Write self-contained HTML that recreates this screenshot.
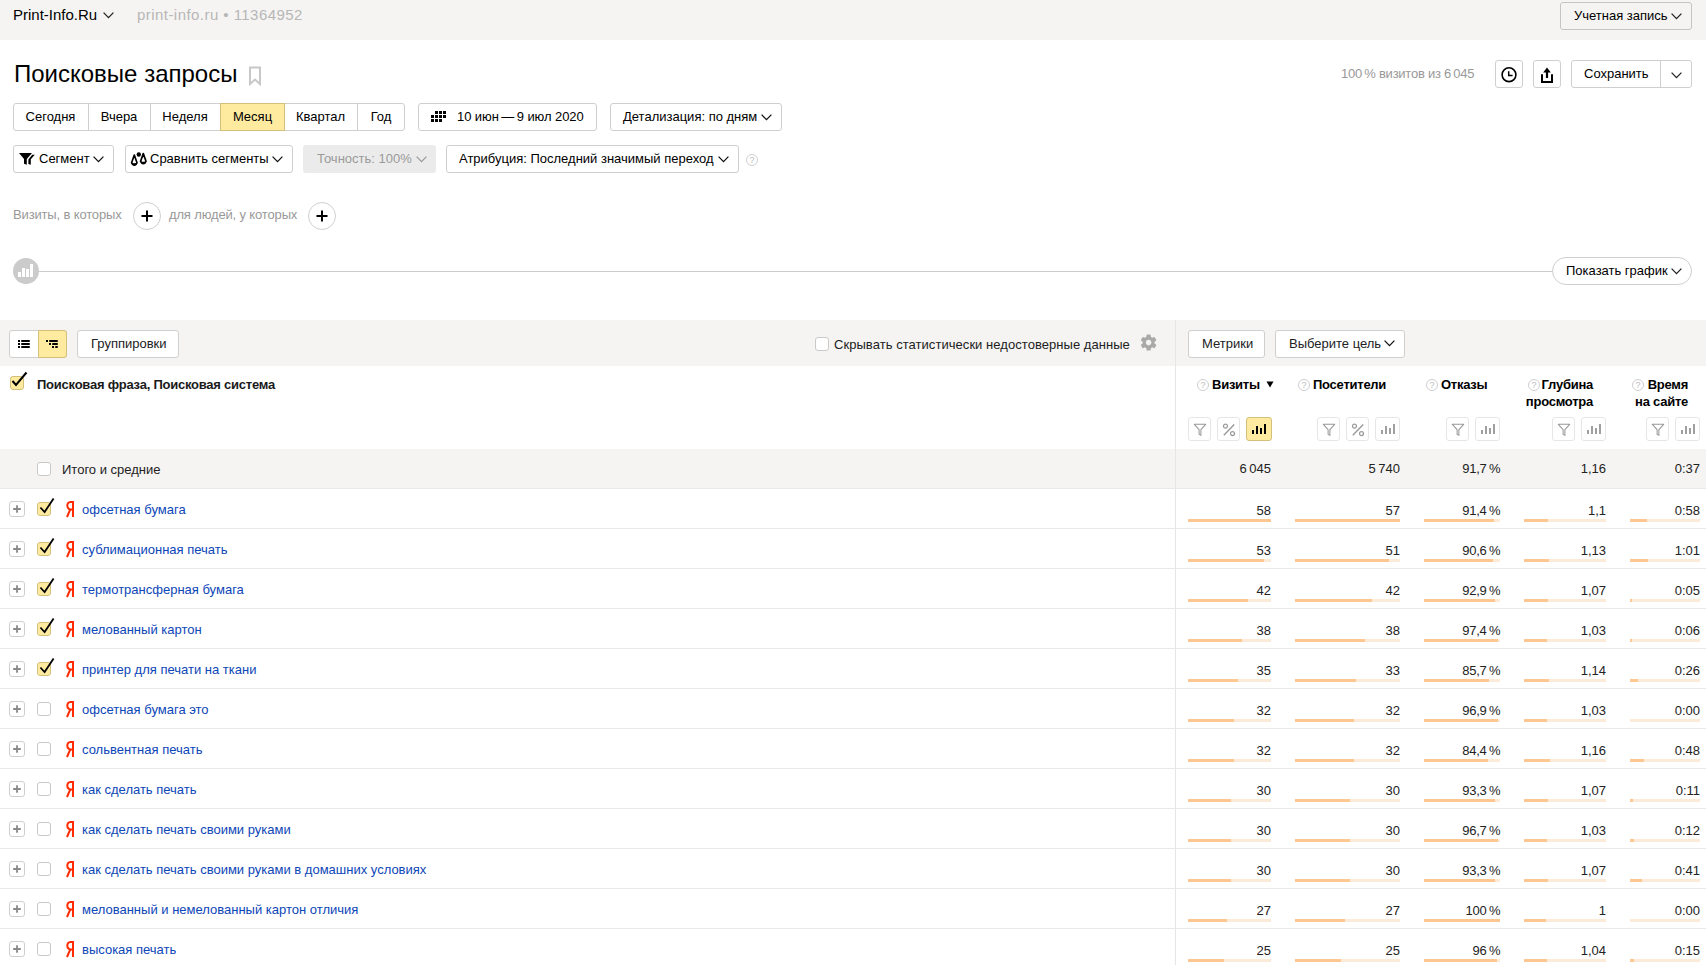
<!DOCTYPE html><html><head><meta charset="utf-8"><title>Поисковые запросы</title><style>
*{box-sizing:border-box;margin:0;padding:0}
html,body{width:1706px;height:965px;overflow:hidden;background:#fff}
body{position:relative;font-family:"Liberation Sans",sans-serif;font-size:13px;line-height:15px;color:#000}
.a{position:absolute;white-space:nowrap}
.btn{position:absolute;border:1px solid #cfcfcf;border-radius:3px;background:#fff}
.chev{position:absolute}
.g{color:#999}
.lnk{color:#0c46b7}
.rt{text-align:right}
.b{font-weight:bold;letter-spacing:-0.25px}
.hb{position:absolute;border:1px solid #e6e6e6;border-radius:3px;background:#fff;width:23px;height:24px}
.hby{position:absolute;border:1px solid #d4c07a;border-radius:3px;background:#ffeba0;width:26px;height:24px}
.cb{position:absolute;width:14px;height:14px;border:1px solid #c9c9c9;border-radius:3px;background:#fff}
.cbc{position:absolute;width:14px;height:14px;border:1px solid #d4c07a;border-radius:3px;background:#ffeba0}
.pl{position:absolute;width:16px;height:16px;border:1px solid #cfcfcf;border-radius:3px;background:#fff}
.rowline{position:absolute;left:0;width:1706px;height:1px;background:#e8e8e8}
.bar{position:absolute;height:3px;background:#fdebd9}
.bar i{position:absolute;left:0;top:0;height:3px;background:#fec792}
.help{position:absolute;width:12px;height:12px;border:1px solid #cfcfcf;border-radius:50%;color:#bbb;font-size:9px;line-height:10px;text-align:center}
</style></head><body>
<div class="a" style="left:0;top:0;width:1706px;height:40px;background:#f5f4f2"></div>
<div class="a " style="left:13px;top:6px;font-size:15px;line-height:17px">Print-Info.Ru</div>
<svg class="chev" style="left:102px;top:11px" width="13" height="8" viewBox="0 0 13 8"><path d="M1.6 1.6 L6.5 6.6 L11.4 1.6" fill="none" stroke="#222" stroke-width="1.3"/></svg>
<div class="a " style="left:137px;top:6px;font-size:15px;line-height:17px;color:#b7b7b7;letter-spacing:0.45px">print-info.ru • 11364952</div>
<div class="btn" style="left:1560px;top:2px;width:132px;height:28px;background:transparent;border-color:#c4c4c4"></div>
<div class="a " style="left:1574px;top:8px;">Учетная запись</div>
<svg class="chev" style="left:1670px;top:12px" width="13" height="8" viewBox="0 0 13 8"><path d="M1.6 1.6 L6.5 6.6 L11.4 1.6" fill="none" stroke="#222" stroke-width="1.3"/></svg>
<div class="a " style="left:14px;top:60px;font-size:24px;line-height:27px">Поисковые запросы</div>
<svg class="a" style="left:248px;top:66px" width="14" height="20" viewBox="0 0 14 20"><path d="M2 1.5 H12 V18 L7 13.5 L2 18 Z" fill="none" stroke="#c8c8c8" stroke-width="2"/></svg>
<div class="a g" style="left:1341px;top:66px;letter-spacing:-0.25px">100&#8201;% визитов из 6&#8201;045</div>
<div class="btn" style="left:1495px;top:60px;width:28px;height:28px"></div>
<svg class="a" style="left:1499px;top:64px" width="20" height="20" viewBox="0 0 20 20"><circle cx="10" cy="10.7" r="6.9" fill="none" stroke="#000" stroke-width="1.6"/><path d="M9.7 7.2 V11.6 H13.6" fill="none" stroke="#000" stroke-width="1.5"/></svg>
<div class="btn" style="left:1533px;top:60px;width:28px;height:28px"></div>
<svg class="a" style="left:1537px;top:64px" width="20" height="20" viewBox="0 0 20 20"><path d="M10 3.4 L6.2 8.6 H13.8 Z" fill="#000"/><path d="M10 8 V14" stroke="#000" stroke-width="2.2"/><path d="M5 10.2 V18 H15 V10.2" fill="none" stroke="#000" stroke-width="2"/></svg>
<div class="btn" style="left:1571px;top:60px;width:121px;height:28px"></div>
<div class="a" style="left:1660px;top:61px;width:1px;height:26px;background:#cfcfcf"></div>
<div class="a " style="left:1584px;top:66px;">Сохранить</div>
<svg class="chev" style="left:1670px;top:71px" width="13" height="8" viewBox="0 0 13 8"><path d="M1.6 1.6 L6.5 6.6 L11.4 1.6" fill="none" stroke="#222" stroke-width="1.3"/></svg>
<div class="btn" style="left:13px;top:103px;width:392px;height:28px"></div>
<div class="a" style="left:220px;top:103px;width:65px;height:28px;background:#ffeba0;border:1px solid #d4c07a"></div>
<div class="a" style="left:88px;top:104px;width:1px;height:26px;background:#cfcfcf"></div>
<div class="a" style="left:150px;top:104px;width:1px;height:26px;background:#cfcfcf"></div>
<div class="a" style="left:357px;top:104px;width:1px;height:26px;background:#cfcfcf"></div>
<div class="a" style="left:13px;top:109px;width:75px;text-align:center">Сегодня</div>
<div class="a" style="left:88px;top:109px;width:62px;text-align:center">Вчера</div>
<div class="a" style="left:150px;top:109px;width:70px;text-align:center">Неделя</div>
<div class="a" style="left:220px;top:109px;width:65px;text-align:center">Месяц</div>
<div class="a" style="left:284px;top:109px;width:73px;text-align:center">Квартал</div>
<div class="a" style="left:357px;top:109px;width:48px;text-align:center">Год</div>
<div class="btn" style="left:418px;top:103px;width:179px;height:28px"></div>
<svg class="a" style="left:431px;top:111px" width="15" height="11" viewBox="0 0 15 11" fill="#000"><rect x="4" y="0" width="3" height="3"/><rect x="8" y="0" width="3" height="3"/><rect x="12" y="0" width="3" height="3"/><rect x="0" y="4" width="3" height="3"/><rect x="4" y="4" width="3" height="3"/><rect x="8" y="4" width="3" height="3"/><rect x="12" y="4" width="3" height="3"/><rect x="0" y="8" width="3" height="3"/><rect x="4" y="8" width="3" height="3"/><rect x="8" y="8" width="3" height="3"/></svg>
<div class="a " style="left:457px;top:109px;letter-spacing:-0.08px">10 июн&#8201;—&#8201;9 июл 2020</div>
<div class="btn" style="left:610px;top:103px;width:172px;height:28px"></div>
<div class="a " style="left:623px;top:109px;">Детализация: по дням</div>
<svg class="chev" style="left:760px;top:113px" width="13" height="8" viewBox="0 0 13 8"><path d="M1.6 1.6 L6.5 6.6 L11.4 1.6" fill="none" stroke="#111" stroke-width="1.3"/></svg>
<div class="btn" style="left:13px;top:145px;width:101px;height:28px"></div>
<svg class="a" style="left:18px;top:152px" width="18" height="14" viewBox="0 0 18 14"><path d="M1 1 H14 L8.8 7 V12.8 L6 11.8 V7 Z" fill="#000"/><path d="M14.2 2.8 H16.8 L12.8 7.3 V12.8 L10.4 11.9 V7.4 Z" fill="#000"/></svg>
<div class="a " style="left:39px;top:151px;">Сегмент</div>
<svg class="chev" style="left:92px;top:155px" width="13" height="8" viewBox="0 0 13 8"><path d="M1.6 1.6 L6.5 6.6 L11.4 1.6" fill="none" stroke="#111" stroke-width="1.3"/></svg>
<div class="btn" style="left:125px;top:145px;width:168px;height:28px"></div>
<svg class="a" style="left:130px;top:152px" width="18" height="15" viewBox="0 0 18 15"><circle cx="8.8" cy="2.5" r="2.2" fill="#000"/><g transform="translate(0,0.8)"><path d="M4.3 2.2 L1.6 10 A3 3 0 0 0 7 10 Z" fill="none" stroke="#000" stroke-width="1.7" stroke-linejoin="round"/><path d="M4.3 10.5 H6.9 A2.6 2.6 0 0 1 1.7 10.5 Z" fill="#000"/></g><path d="M13.3 1.6 L10.6 9.3 A3 3 0 0 0 16 9.3 Z" fill="none" stroke="#000" stroke-width="1.7" stroke-linejoin="round"/><path d="M13.3 9.8 H15.9 A2.6 2.6 0 0 1 10.7 9.8 Z" fill="#000"/></svg>
<div class="a " style="left:150px;top:151px;">Сравнить сегменты</div>
<svg class="chev" style="left:271px;top:155px" width="13" height="8" viewBox="0 0 13 8"><path d="M1.6 1.6 L6.5 6.6 L11.4 1.6" fill="none" stroke="#111" stroke-width="1.3"/></svg>
<div class="a" style="left:303px;top:145px;width:133px;height:28px;background:#ebebeb;border-radius:3px"></div>
<div class="a " style="left:317px;top:151px;color:#9a9a9a">Точность: 100%</div>
<svg class="chev" style="left:415px;top:155px" width="13" height="8" viewBox="0 0 13 8"><path d="M1.6 1.6 L6.5 6.6 L11.4 1.6" fill="none" stroke="#9a9a9a" stroke-width="1.3"/></svg>
<div class="btn" style="left:446px;top:145px;width:293px;height:28px"></div>
<div class="a " style="left:459px;top:151px;">Атрибуция: Последний значимый переход</div>
<svg class="chev" style="left:717px;top:155px" width="13" height="8" viewBox="0 0 13 8"><path d="M1.6 1.6 L6.5 6.6 L11.4 1.6" fill="none" stroke="#111" stroke-width="1.3"/></svg>
<div class="help" style="left:746px;top:154px">?</div>
<div class="a g" style="left:13px;top:207px;letter-spacing:-0.15px">Визиты, в которых</div>
<div class="a" style="left:133px;top:202px;width:28px;height:28px;border:1px solid #cfcfcf;border-radius:50%"></div>
<svg class="a" style="left:139px;top:208px" width="16" height="16" viewBox="0 0 16 16"><path d="M8 2.5 V13.5 M2.5 8 H13.5" stroke="#000" stroke-width="2"/></svg>
<div class="a g" style="left:169px;top:207px;letter-spacing:-0.15px">для людей, у которых</div>
<div class="a" style="left:308px;top:202px;width:28px;height:28px;border:1px solid #cfcfcf;border-radius:50%"></div>
<svg class="a" style="left:314px;top:208px" width="16" height="16" viewBox="0 0 16 16"><path d="M8 2.5 V13.5 M2.5 8 H13.5" stroke="#000" stroke-width="2"/></svg>
<div class="a" style="left:26px;top:271px;width:1530px;height:1px;background:#cccccc"></div>
<div class="a" style="left:13px;top:258px;width:26px;height:26px;border-radius:50%;background:#cbcbcb"></div>
<svg class="a" style="left:13px;top:258px" width="26" height="26" viewBox="0 0 26 26" fill="#fff"><rect x="5" y="14" width="3" height="5"/><rect x="9" y="10" width="3" height="9"/><rect x="13" y="11" width="3" height="8"/><rect x="17" y="6" width="3" height="13"/></svg>
<div class="a" style="left:1552px;top:257px;width:140px;height:28px;border:1px solid #cfcfcf;border-radius:14px;background:#fff"></div>
<div class="a " style="left:1566px;top:263px;">Показать график</div>
<svg class="chev" style="left:1670px;top:267px" width="13" height="8" viewBox="0 0 13 8"><path d="M1.6 1.6 L6.5 6.6 L11.4 1.6" fill="none" stroke="#222" stroke-width="1.3"/></svg>
<div class="a" style="left:0;top:320px;width:1706px;height:46px;background:#f5f4f2"></div>
<div class="a" style="left:1175px;top:320px;width:1px;height:645px;background:#e6e6e6"></div>
<div class="btn" style="left:9px;top:330px;width:58px;height:28px"></div>
<div class="a" style="left:38px;top:330px;width:29px;height:28px;background:#ffeba0;border:1px solid #d4c07a;border-radius:0 3px 3px 0"></div>
<svg class="a" style="left:18px;top:340px" width="12" height="8" viewBox="0 0 12 8" fill="#000"><rect x="0" y="0" width="2" height="2"/><rect x="3" y="0" width="9" height="2" rx="1"/><rect x="0" y="3" width="2" height="2"/><rect x="3" y="3" width="9" height="2" rx="1"/><rect x="0" y="6" width="2" height="2"/><rect x="3" y="6" width="9" height="2" rx="1"/></svg>
<svg class="a" style="left:46px;top:340px" width="12" height="8" viewBox="0 0 12 8" fill="#000"><rect x="0" y="0" width="2" height="2"/><rect x="3" y="0" width="9" height="2" rx="1"/><rect x="3" y="3" width="2" height="2"/><rect x="6" y="3" width="6" height="2" rx="1"/><rect x="6" y="6" width="2" height="2"/><rect x="9" y="6" width="3" height="2" rx="1"/></svg>
<div class="btn" style="left:77px;top:330px;width:102px;height:28px"></div>
<div class="a " style="left:91px;top:336px;color:#222">Группировки</div>
<div class="cb" style="left:815px;top:337px"></div>
<div class="a " style="left:834px;top:337px;color:#222;letter-spacing:0.05px">Скрывать статистически недостоверные данные</div>
<svg class="a" style="left:1139.4px;top:332.6px" width="19.2" height="19.2" viewBox="0 0 24 24"><path fill="#a9a9a9" d="M19.4 13c.04-.33.06-.66.06-1s-.02-.67-.06-1l2.1-1.65c.19-.15.24-.42.12-.64l-2-3.46c-.12-.22-.39-.3-.61-.22l-2.49 1c-.52-.4-1.08-.73-1.69-.98l-.38-2.65A.49.49 0 0 0 14 2h-4c-.25 0-.46.18-.49.42l-.38 2.65c-.61.25-1.17.59-1.69.98l-2.49-1c-.23-.09-.49 0-.61.22l-2 3.46c-.13.22-.07.49.12.64L4.57 11c-.04.33-.07.67-.07 1s.03.67.07 1l-2.11 1.65c-.19.15-.24.42-.12.64l2 3.46c.12.22.39.3.61.22l2.49-1c.52.4 1.08.73 1.69.98l.38 2.65c.03.24.24.42.49.42h4c.25 0 .46-.18.49-.42l.38-2.65c.61-.25 1.17-.59 1.69-.98l2.49 1c.23.09.49 0 .61-.22l2-3.46c.12-.22.07-.49-.12-.64L19.4 13zM12 15.5c-1.93 0-3.5-1.57-3.5-3.5s1.57-3.5 3.5-3.5 3.5 1.57 3.5 3.5-1.57 3.5-3.5 3.5z"/></svg>
<div class="btn" style="left:1188px;top:330px;width:77px;height:28px"></div>
<div class="a " style="left:1202px;top:336px;color:#222">Метрики</div>
<div class="btn" style="left:1275px;top:330px;width:130px;height:28px"></div>
<div class="a " style="left:1289px;top:336px;color:#222">Выберите цель</div>
<svg class="chev" style="left:1383px;top:339px" width="13" height="8" viewBox="0 0 13 8"><path d="M1.6 1.6 L6.5 6.6 L11.4 1.6" fill="none" stroke="#111" stroke-width="1.3"/></svg>
<div class="cbc" style="left:10px;top:376px"></div>
<svg class="a" style="left:9px;top:370px" width="20" height="20" viewBox="0 0 20 20"><path d="M3.5 11 L7 15 L17.5 2.5" fill="none" stroke="#000" stroke-width="2"/></svg>
<div class="a b" style="left:37px;top:377px;color:#1a1a1a;letter-spacing:-0.24px">Поисковая фраза, Поисковая система</div>
<div class="help" style="left:1197px;top:379px">?</div>
<div class="a b" style="left:1212px;top:377px;">Визиты</div>
<svg class="a" style="left:1266px;top:381px" width="8" height="7" viewBox="0 0 8 7"><path d="M0.5 0.5 H7.5 L4 6.5 Z" fill="#000"/></svg>
<div class="help" style="left:1298px;top:379px">?</div>
<div class="a b" style="left:1313px;top:377px;">Посетители</div>
<div class="help" style="left:1426px;top:379px">?</div>
<div class="a b" style="left:1441px;top:377px;">Отказы</div>
<div class="help" style="left:1528px;top:379px">?</div>
<div class="a b rt" style="left:1499px;top:376px;width:94px;line-height:17px">Глубина<br>просмотра</div>
<div class="help" style="left:1632px;top:379px">?</div>
<div class="a b rt" style="left:1599px;top:376px;width:89px;line-height:17px">Время<br>на сайте</div>
<div class="hb" style="left:1188px;top:417px"></div><svg class="a" style="left:1193px;top:423px" width="14" height="14" viewBox="0 0 14 14"><path d="M1.3 1.3 H12.7 L7.9 6.7 V12.4 L6.1 11.4 V6.7 Z" fill="none" stroke="#999" stroke-width="1.05" stroke-linejoin="round"/></svg><div class="hb" style="left:1217px;top:417px"></div><svg class="a" style="left:1222px;top:423px" width="14" height="14" viewBox="0 0 14 14"><circle cx="3.5" cy="3.2" r="2" fill="none" stroke="#999" stroke-width="1.2"/><circle cx="10.5" cy="10.6" r="2" fill="none" stroke="#999" stroke-width="1.2"/><path d="M1.8 12.2 L12.2 1.6" stroke="#999" stroke-width="1.4"/></svg><div class="hby" style="left:1246px;top:417px"></div><svg class="a" style="left:1252px;top:424px" width="14" height="12" viewBox="0 0 14 12" fill="#000"><rect x="0" y="6" width="2" height="4"/><rect x="4" y="2" width="2" height="8"/><rect x="8" y="4" width="2" height="6"/><rect x="12" y="0" width="2" height="10"/></svg>
<div class="hb" style="left:1317px;top:417px"></div><svg class="a" style="left:1322px;top:423px" width="14" height="14" viewBox="0 0 14 14"><path d="M1.3 1.3 H12.7 L7.9 6.7 V12.4 L6.1 11.4 V6.7 Z" fill="none" stroke="#999" stroke-width="1.05" stroke-linejoin="round"/></svg><div class="hb" style="left:1346px;top:417px"></div><svg class="a" style="left:1351px;top:423px" width="14" height="14" viewBox="0 0 14 14"><circle cx="3.5" cy="3.2" r="2" fill="none" stroke="#999" stroke-width="1.2"/><circle cx="10.5" cy="10.6" r="2" fill="none" stroke="#999" stroke-width="1.2"/><path d="M1.8 12.2 L12.2 1.6" stroke="#999" stroke-width="1.4"/></svg><div class="hb" style="left:1375px;top:417px;width:25px"></div><svg class="a" style="left:1381px;top:424px" width="14" height="12" viewBox="0 0 14 12" fill="#a0a0a0"><rect x="0" y="6" width="2" height="4"/><rect x="4" y="2" width="2" height="8"/><rect x="8" y="4" width="2" height="6"/><rect x="12" y="0" width="2" height="10"/></svg>
<div class="hb" style="left:1446px;top:417px"></div><svg class="a" style="left:1451px;top:423px" width="14" height="14" viewBox="0 0 14 14"><path d="M1.3 1.3 H12.7 L7.9 6.7 V12.4 L6.1 11.4 V6.7 Z" fill="none" stroke="#999" stroke-width="1.05" stroke-linejoin="round"/></svg><div class="hb" style="left:1475px;top:417px;width:25px"></div><svg class="a" style="left:1481px;top:424px" width="14" height="12" viewBox="0 0 14 12" fill="#a0a0a0"><rect x="0" y="6" width="2" height="4"/><rect x="4" y="2" width="2" height="8"/><rect x="8" y="4" width="2" height="6"/><rect x="12" y="0" width="2" height="10"/></svg>
<div class="hb" style="left:1552px;top:417px"></div><svg class="a" style="left:1557px;top:423px" width="14" height="14" viewBox="0 0 14 14"><path d="M1.3 1.3 H12.7 L7.9 6.7 V12.4 L6.1 11.4 V6.7 Z" fill="none" stroke="#999" stroke-width="1.05" stroke-linejoin="round"/></svg><div class="hb" style="left:1581px;top:417px;width:25px"></div><svg class="a" style="left:1587px;top:424px" width="14" height="12" viewBox="0 0 14 12" fill="#a0a0a0"><rect x="0" y="6" width="2" height="4"/><rect x="4" y="2" width="2" height="8"/><rect x="8" y="4" width="2" height="6"/><rect x="12" y="0" width="2" height="10"/></svg>
<div class="hb" style="left:1646px;top:417px"></div><svg class="a" style="left:1651px;top:423px" width="14" height="14" viewBox="0 0 14 14"><path d="M1.3 1.3 H12.7 L7.9 6.7 V12.4 L6.1 11.4 V6.7 Z" fill="none" stroke="#999" stroke-width="1.05" stroke-linejoin="round"/></svg><div class="hb" style="left:1675px;top:417px;width:25px"></div><svg class="a" style="left:1681px;top:424px" width="14" height="12" viewBox="0 0 14 12" fill="#a0a0a0"><rect x="0" y="6" width="2" height="4"/><rect x="4" y="2" width="2" height="8"/><rect x="8" y="4" width="2" height="6"/><rect x="12" y="0" width="2" height="10"/></svg>
<div class="a" style="left:0;top:449px;width:1706px;height:40px;background:#f5f4f2"></div>
<div class="a" style="left:1175px;top:449px;width:1px;height:40px;background:#e6e6e6"></div>
<div class="rowline" style="top:488px"></div>
<div class="cb" style="left:37px;top:462px"></div>
<div class="a " style="left:62px;top:462px;color:#222">Итого и средние</div>
<div class="a rt" style="left:1188px;top:461px;width:83px;color:#222;">6&#8201;045</div><div class="a rt" style="left:1295px;top:461px;width:105px;color:#222;">5&#8201;740</div><div class="a rt" style="left:1424px;top:461px;width:76.3px;color:#222;letter-spacing:-0.25px;">91,7<span style="margin-left:2.5px">%</span></div><div class="a rt" style="left:1524px;top:461px;width:82px;color:#222;">1,16</div><div class="a rt" style="left:1630px;top:461px;width:70px;color:#222;">0:37</div>
<div class="rowline" style="top:528px"></div>
<div class="pl" style="left:9px;top:501px"></div>
<svg class="a" style="left:9px;top:501px" width="16" height="16" viewBox="0 0 16 16"><path d="M8 4.2 V11.8 M4.2 8 H11.8" stroke="#8a8a8a" stroke-width="1.8"/></svg>
<div class="cbc" style="left:37px;top:502px"></div>
<svg class="a" style="left:37px;top:496px" width="20" height="20" viewBox="0 0 20 20"><path d="M3.4 11.5 L7.6 16 L16.6 2.4" fill="none" stroke="#000" stroke-width="1.8"/></svg>
<svg class="a" style="left:64px;top:499px" width="12" height="20" viewBox="0 0 12 20"><path d="M9 3 H6.6 C4.2 3 3.3 4.8 3.3 6.6 C3.3 8.9 4.6 10.4 6.9 10.4 H9" fill="none" stroke="#ff2a00" stroke-width="2"/><rect x="8" y="2" width="2" height="16" fill="#ff2a00"/><path d="M6.4 10.2 L3 18" fill="none" stroke="#ff2a00" stroke-width="2"/></svg>
<div class="a lnk" style="left:82px;top:502px;">офсетная бумага</div>
<div class="a rt" style="left:1188px;top:503px;width:83px;color:#222;">58</div><div class="a rt" style="left:1295px;top:503px;width:105px;color:#222;">57</div><div class="a rt" style="left:1424px;top:503px;width:76.3px;color:#222;letter-spacing:-0.25px;">91,4<span style="margin-left:2.5px">%</span></div><div class="a rt" style="left:1524px;top:503px;width:82px;color:#222;">1,1</div><div class="a rt" style="left:1630px;top:503px;width:70px;color:#222;">0:58</div>
<div class="bar" style="left:1188px;top:519px;width:83px"><i style="width:83.0px"></i></div>
<div class="bar" style="left:1295px;top:519px;width:105px"><i style="width:105.0px"></i></div>
<div class="bar" style="left:1424px;top:519px;width:76px"><i style="width:69.5px"></i></div>
<div class="bar" style="left:1524px;top:519px;width:82px"><i style="width:24.4px"></i></div>
<div class="bar" style="left:1630px;top:519px;width:70px"><i style="width:17.2px"></i></div>
<div class="rowline" style="top:568px"></div>
<div class="pl" style="left:9px;top:541px"></div>
<svg class="a" style="left:9px;top:541px" width="16" height="16" viewBox="0 0 16 16"><path d="M8 4.2 V11.8 M4.2 8 H11.8" stroke="#8a8a8a" stroke-width="1.8"/></svg>
<div class="cbc" style="left:37px;top:542px"></div>
<svg class="a" style="left:37px;top:536px" width="20" height="20" viewBox="0 0 20 20"><path d="M3.4 11.5 L7.6 16 L16.6 2.4" fill="none" stroke="#000" stroke-width="1.8"/></svg>
<svg class="a" style="left:64px;top:539px" width="12" height="20" viewBox="0 0 12 20"><path d="M9 3 H6.6 C4.2 3 3.3 4.8 3.3 6.6 C3.3 8.9 4.6 10.4 6.9 10.4 H9" fill="none" stroke="#ff2a00" stroke-width="2"/><rect x="8" y="2" width="2" height="16" fill="#ff2a00"/><path d="M6.4 10.2 L3 18" fill="none" stroke="#ff2a00" stroke-width="2"/></svg>
<div class="a lnk" style="left:82px;top:542px;">сублимационная печать</div>
<div class="a rt" style="left:1188px;top:543px;width:83px;color:#222;">53</div><div class="a rt" style="left:1295px;top:543px;width:105px;color:#222;">51</div><div class="a rt" style="left:1424px;top:543px;width:76.3px;color:#222;letter-spacing:-0.25px;">90,6<span style="margin-left:2.5px">%</span></div><div class="a rt" style="left:1524px;top:543px;width:82px;color:#222;">1,13</div><div class="a rt" style="left:1630px;top:543px;width:70px;color:#222;">1:01</div>
<div class="bar" style="left:1188px;top:559px;width:83px"><i style="width:75.8px"></i></div>
<div class="bar" style="left:1295px;top:559px;width:105px"><i style="width:93.9px"></i></div>
<div class="bar" style="left:1424px;top:559px;width:76px"><i style="width:68.9px"></i></div>
<div class="bar" style="left:1524px;top:559px;width:82px"><i style="width:25.0px"></i></div>
<div class="bar" style="left:1630px;top:559px;width:70px"><i style="width:18.1px"></i></div>
<div class="rowline" style="top:608px"></div>
<div class="pl" style="left:9px;top:581px"></div>
<svg class="a" style="left:9px;top:581px" width="16" height="16" viewBox="0 0 16 16"><path d="M8 4.2 V11.8 M4.2 8 H11.8" stroke="#8a8a8a" stroke-width="1.8"/></svg>
<div class="cbc" style="left:37px;top:582px"></div>
<svg class="a" style="left:37px;top:576px" width="20" height="20" viewBox="0 0 20 20"><path d="M3.4 11.5 L7.6 16 L16.6 2.4" fill="none" stroke="#000" stroke-width="1.8"/></svg>
<svg class="a" style="left:64px;top:579px" width="12" height="20" viewBox="0 0 12 20"><path d="M9 3 H6.6 C4.2 3 3.3 4.8 3.3 6.6 C3.3 8.9 4.6 10.4 6.9 10.4 H9" fill="none" stroke="#ff2a00" stroke-width="2"/><rect x="8" y="2" width="2" height="16" fill="#ff2a00"/><path d="M6.4 10.2 L3 18" fill="none" stroke="#ff2a00" stroke-width="2"/></svg>
<div class="a lnk" style="left:82px;top:582px;">термотрансферная бумага</div>
<div class="a rt" style="left:1188px;top:583px;width:83px;color:#222;">42</div><div class="a rt" style="left:1295px;top:583px;width:105px;color:#222;">42</div><div class="a rt" style="left:1424px;top:583px;width:76.3px;color:#222;letter-spacing:-0.25px;">92,9<span style="margin-left:2.5px">%</span></div><div class="a rt" style="left:1524px;top:583px;width:82px;color:#222;">1,07</div><div class="a rt" style="left:1630px;top:583px;width:70px;color:#222;">0:05</div>
<div class="bar" style="left:1188px;top:599px;width:83px"><i style="width:60.1px"></i></div>
<div class="bar" style="left:1295px;top:599px;width:105px"><i style="width:77.4px"></i></div>
<div class="bar" style="left:1424px;top:599px;width:76px"><i style="width:70.6px"></i></div>
<div class="bar" style="left:1524px;top:599px;width:82px"><i style="width:23.7px"></i></div>
<div class="bar" style="left:1630px;top:599px;width:70px"><i style="width:1.5px"></i></div>
<div class="rowline" style="top:648px"></div>
<div class="pl" style="left:9px;top:621px"></div>
<svg class="a" style="left:9px;top:621px" width="16" height="16" viewBox="0 0 16 16"><path d="M8 4.2 V11.8 M4.2 8 H11.8" stroke="#8a8a8a" stroke-width="1.8"/></svg>
<div class="cbc" style="left:37px;top:622px"></div>
<svg class="a" style="left:37px;top:616px" width="20" height="20" viewBox="0 0 20 20"><path d="M3.4 11.5 L7.6 16 L16.6 2.4" fill="none" stroke="#000" stroke-width="1.8"/></svg>
<svg class="a" style="left:64px;top:619px" width="12" height="20" viewBox="0 0 12 20"><path d="M9 3 H6.6 C4.2 3 3.3 4.8 3.3 6.6 C3.3 8.9 4.6 10.4 6.9 10.4 H9" fill="none" stroke="#ff2a00" stroke-width="2"/><rect x="8" y="2" width="2" height="16" fill="#ff2a00"/><path d="M6.4 10.2 L3 18" fill="none" stroke="#ff2a00" stroke-width="2"/></svg>
<div class="a lnk" style="left:82px;top:622px;">мелованный картон</div>
<div class="a rt" style="left:1188px;top:623px;width:83px;color:#222;">38</div><div class="a rt" style="left:1295px;top:623px;width:105px;color:#222;">38</div><div class="a rt" style="left:1424px;top:623px;width:76.3px;color:#222;letter-spacing:-0.25px;">97,4<span style="margin-left:2.5px">%</span></div><div class="a rt" style="left:1524px;top:623px;width:82px;color:#222;">1,03</div><div class="a rt" style="left:1630px;top:623px;width:70px;color:#222;">0:06</div>
<div class="bar" style="left:1188px;top:639px;width:83px"><i style="width:54.4px"></i></div>
<div class="bar" style="left:1295px;top:639px;width:105px"><i style="width:70.0px"></i></div>
<div class="bar" style="left:1424px;top:639px;width:76px"><i style="width:74.0px"></i></div>
<div class="bar" style="left:1524px;top:639px;width:82px"><i style="width:22.8px"></i></div>
<div class="bar" style="left:1630px;top:639px;width:70px"><i style="width:1.8px"></i></div>
<div class="rowline" style="top:688px"></div>
<div class="pl" style="left:9px;top:661px"></div>
<svg class="a" style="left:9px;top:661px" width="16" height="16" viewBox="0 0 16 16"><path d="M8 4.2 V11.8 M4.2 8 H11.8" stroke="#8a8a8a" stroke-width="1.8"/></svg>
<div class="cbc" style="left:37px;top:662px"></div>
<svg class="a" style="left:37px;top:656px" width="20" height="20" viewBox="0 0 20 20"><path d="M3.4 11.5 L7.6 16 L16.6 2.4" fill="none" stroke="#000" stroke-width="1.8"/></svg>
<svg class="a" style="left:64px;top:659px" width="12" height="20" viewBox="0 0 12 20"><path d="M9 3 H6.6 C4.2 3 3.3 4.8 3.3 6.6 C3.3 8.9 4.6 10.4 6.9 10.4 H9" fill="none" stroke="#ff2a00" stroke-width="2"/><rect x="8" y="2" width="2" height="16" fill="#ff2a00"/><path d="M6.4 10.2 L3 18" fill="none" stroke="#ff2a00" stroke-width="2"/></svg>
<div class="a lnk" style="left:82px;top:662px;">принтер для печати на ткани</div>
<div class="a rt" style="left:1188px;top:663px;width:83px;color:#222;">35</div><div class="a rt" style="left:1295px;top:663px;width:105px;color:#222;">33</div><div class="a rt" style="left:1424px;top:663px;width:76.3px;color:#222;letter-spacing:-0.25px;">85,7<span style="margin-left:2.5px">%</span></div><div class="a rt" style="left:1524px;top:663px;width:82px;color:#222;">1,14</div><div class="a rt" style="left:1630px;top:663px;width:70px;color:#222;">0:26</div>
<div class="bar" style="left:1188px;top:679px;width:83px"><i style="width:50.1px"></i></div>
<div class="bar" style="left:1295px;top:679px;width:105px"><i style="width:60.8px"></i></div>
<div class="bar" style="left:1424px;top:679px;width:76px"><i style="width:65.1px"></i></div>
<div class="bar" style="left:1524px;top:679px;width:82px"><i style="width:25.3px"></i></div>
<div class="bar" style="left:1630px;top:679px;width:70px"><i style="width:7.7px"></i></div>
<div class="rowline" style="top:728px"></div>
<div class="pl" style="left:9px;top:701px"></div>
<svg class="a" style="left:9px;top:701px" width="16" height="16" viewBox="0 0 16 16"><path d="M8 4.2 V11.8 M4.2 8 H11.8" stroke="#8a8a8a" stroke-width="1.8"/></svg>
<div class="cb" style="left:37px;top:702px"></div>
<svg class="a" style="left:64px;top:699px" width="12" height="20" viewBox="0 0 12 20"><path d="M9 3 H6.6 C4.2 3 3.3 4.8 3.3 6.6 C3.3 8.9 4.6 10.4 6.9 10.4 H9" fill="none" stroke="#ff2a00" stroke-width="2"/><rect x="8" y="2" width="2" height="16" fill="#ff2a00"/><path d="M6.4 10.2 L3 18" fill="none" stroke="#ff2a00" stroke-width="2"/></svg>
<div class="a lnk" style="left:82px;top:702px;">офсетная бумага это</div>
<div class="a rt" style="left:1188px;top:703px;width:83px;color:#222;">32</div><div class="a rt" style="left:1295px;top:703px;width:105px;color:#222;">32</div><div class="a rt" style="left:1424px;top:703px;width:76.3px;color:#222;letter-spacing:-0.25px;">96,9<span style="margin-left:2.5px">%</span></div><div class="a rt" style="left:1524px;top:703px;width:82px;color:#222;">1,03</div><div class="a rt" style="left:1630px;top:703px;width:70px;color:#222;">0:00</div>
<div class="bar" style="left:1188px;top:719px;width:83px"><i style="width:45.8px"></i></div>
<div class="bar" style="left:1295px;top:719px;width:105px"><i style="width:58.9px"></i></div>
<div class="bar" style="left:1424px;top:719px;width:76px"><i style="width:73.6px"></i></div>
<div class="bar" style="left:1524px;top:719px;width:82px"><i style="width:22.8px"></i></div>
<div class="bar" style="left:1630px;top:719px;width:70px"><i style="width:0.0px"></i></div>
<div class="rowline" style="top:768px"></div>
<div class="pl" style="left:9px;top:741px"></div>
<svg class="a" style="left:9px;top:741px" width="16" height="16" viewBox="0 0 16 16"><path d="M8 4.2 V11.8 M4.2 8 H11.8" stroke="#8a8a8a" stroke-width="1.8"/></svg>
<div class="cb" style="left:37px;top:742px"></div>
<svg class="a" style="left:64px;top:739px" width="12" height="20" viewBox="0 0 12 20"><path d="M9 3 H6.6 C4.2 3 3.3 4.8 3.3 6.6 C3.3 8.9 4.6 10.4 6.9 10.4 H9" fill="none" stroke="#ff2a00" stroke-width="2"/><rect x="8" y="2" width="2" height="16" fill="#ff2a00"/><path d="M6.4 10.2 L3 18" fill="none" stroke="#ff2a00" stroke-width="2"/></svg>
<div class="a lnk" style="left:82px;top:742px;">сольвентная печать</div>
<div class="a rt" style="left:1188px;top:743px;width:83px;color:#222;">32</div><div class="a rt" style="left:1295px;top:743px;width:105px;color:#222;">32</div><div class="a rt" style="left:1424px;top:743px;width:76.3px;color:#222;letter-spacing:-0.25px;">84,4<span style="margin-left:2.5px">%</span></div><div class="a rt" style="left:1524px;top:743px;width:82px;color:#222;">1,16</div><div class="a rt" style="left:1630px;top:743px;width:70px;color:#222;">0:48</div>
<div class="bar" style="left:1188px;top:759px;width:83px"><i style="width:45.8px"></i></div>
<div class="bar" style="left:1295px;top:759px;width:105px"><i style="width:58.9px"></i></div>
<div class="bar" style="left:1424px;top:759px;width:76px"><i style="width:64.1px"></i></div>
<div class="bar" style="left:1524px;top:759px;width:82px"><i style="width:25.7px"></i></div>
<div class="bar" style="left:1630px;top:759px;width:70px"><i style="width:14.2px"></i></div>
<div class="rowline" style="top:808px"></div>
<div class="pl" style="left:9px;top:781px"></div>
<svg class="a" style="left:9px;top:781px" width="16" height="16" viewBox="0 0 16 16"><path d="M8 4.2 V11.8 M4.2 8 H11.8" stroke="#8a8a8a" stroke-width="1.8"/></svg>
<div class="cb" style="left:37px;top:782px"></div>
<svg class="a" style="left:64px;top:779px" width="12" height="20" viewBox="0 0 12 20"><path d="M9 3 H6.6 C4.2 3 3.3 4.8 3.3 6.6 C3.3 8.9 4.6 10.4 6.9 10.4 H9" fill="none" stroke="#ff2a00" stroke-width="2"/><rect x="8" y="2" width="2" height="16" fill="#ff2a00"/><path d="M6.4 10.2 L3 18" fill="none" stroke="#ff2a00" stroke-width="2"/></svg>
<div class="a lnk" style="left:82px;top:782px;">как сделать печать</div>
<div class="a rt" style="left:1188px;top:783px;width:83px;color:#222;">30</div><div class="a rt" style="left:1295px;top:783px;width:105px;color:#222;">30</div><div class="a rt" style="left:1424px;top:783px;width:76.3px;color:#222;letter-spacing:-0.25px;">93,3<span style="margin-left:2.5px">%</span></div><div class="a rt" style="left:1524px;top:783px;width:82px;color:#222;">1,07</div><div class="a rt" style="left:1630px;top:783px;width:70px;color:#222;">0:11</div>
<div class="bar" style="left:1188px;top:799px;width:83px"><i style="width:42.9px"></i></div>
<div class="bar" style="left:1295px;top:799px;width:105px"><i style="width:55.3px"></i></div>
<div class="bar" style="left:1424px;top:799px;width:76px"><i style="width:70.9px"></i></div>
<div class="bar" style="left:1524px;top:799px;width:82px"><i style="width:23.7px"></i></div>
<div class="bar" style="left:1630px;top:799px;width:70px"><i style="width:3.3px"></i></div>
<div class="rowline" style="top:848px"></div>
<div class="pl" style="left:9px;top:821px"></div>
<svg class="a" style="left:9px;top:821px" width="16" height="16" viewBox="0 0 16 16"><path d="M8 4.2 V11.8 M4.2 8 H11.8" stroke="#8a8a8a" stroke-width="1.8"/></svg>
<div class="cb" style="left:37px;top:822px"></div>
<svg class="a" style="left:64px;top:819px" width="12" height="20" viewBox="0 0 12 20"><path d="M9 3 H6.6 C4.2 3 3.3 4.8 3.3 6.6 C3.3 8.9 4.6 10.4 6.9 10.4 H9" fill="none" stroke="#ff2a00" stroke-width="2"/><rect x="8" y="2" width="2" height="16" fill="#ff2a00"/><path d="M6.4 10.2 L3 18" fill="none" stroke="#ff2a00" stroke-width="2"/></svg>
<div class="a lnk" style="left:82px;top:822px;">как сделать печать своими руками</div>
<div class="a rt" style="left:1188px;top:823px;width:83px;color:#222;">30</div><div class="a rt" style="left:1295px;top:823px;width:105px;color:#222;">30</div><div class="a rt" style="left:1424px;top:823px;width:76.3px;color:#222;letter-spacing:-0.25px;">96,7<span style="margin-left:2.5px">%</span></div><div class="a rt" style="left:1524px;top:823px;width:82px;color:#222;">1,03</div><div class="a rt" style="left:1630px;top:823px;width:70px;color:#222;">0:12</div>
<div class="bar" style="left:1188px;top:839px;width:83px"><i style="width:42.9px"></i></div>
<div class="bar" style="left:1295px;top:839px;width:105px"><i style="width:55.3px"></i></div>
<div class="bar" style="left:1424px;top:839px;width:76px"><i style="width:73.5px"></i></div>
<div class="bar" style="left:1524px;top:839px;width:82px"><i style="width:22.8px"></i></div>
<div class="bar" style="left:1630px;top:839px;width:70px"><i style="width:3.6px"></i></div>
<div class="rowline" style="top:888px"></div>
<div class="pl" style="left:9px;top:861px"></div>
<svg class="a" style="left:9px;top:861px" width="16" height="16" viewBox="0 0 16 16"><path d="M8 4.2 V11.8 M4.2 8 H11.8" stroke="#8a8a8a" stroke-width="1.8"/></svg>
<div class="cb" style="left:37px;top:862px"></div>
<svg class="a" style="left:64px;top:859px" width="12" height="20" viewBox="0 0 12 20"><path d="M9 3 H6.6 C4.2 3 3.3 4.8 3.3 6.6 C3.3 8.9 4.6 10.4 6.9 10.4 H9" fill="none" stroke="#ff2a00" stroke-width="2"/><rect x="8" y="2" width="2" height="16" fill="#ff2a00"/><path d="M6.4 10.2 L3 18" fill="none" stroke="#ff2a00" stroke-width="2"/></svg>
<div class="a lnk" style="left:82px;top:862px;">как сделать печать своими руками в домашних условиях</div>
<div class="a rt" style="left:1188px;top:863px;width:83px;color:#222;">30</div><div class="a rt" style="left:1295px;top:863px;width:105px;color:#222;">30</div><div class="a rt" style="left:1424px;top:863px;width:76.3px;color:#222;letter-spacing:-0.25px;">93,3<span style="margin-left:2.5px">%</span></div><div class="a rt" style="left:1524px;top:863px;width:82px;color:#222;">1,07</div><div class="a rt" style="left:1630px;top:863px;width:70px;color:#222;">0:41</div>
<div class="bar" style="left:1188px;top:879px;width:83px"><i style="width:42.9px"></i></div>
<div class="bar" style="left:1295px;top:879px;width:105px"><i style="width:55.3px"></i></div>
<div class="bar" style="left:1424px;top:879px;width:76px"><i style="width:70.9px"></i></div>
<div class="bar" style="left:1524px;top:879px;width:82px"><i style="width:23.7px"></i></div>
<div class="bar" style="left:1630px;top:879px;width:70px"><i style="width:12.2px"></i></div>
<div class="rowline" style="top:928px"></div>
<div class="pl" style="left:9px;top:901px"></div>
<svg class="a" style="left:9px;top:901px" width="16" height="16" viewBox="0 0 16 16"><path d="M8 4.2 V11.8 M4.2 8 H11.8" stroke="#8a8a8a" stroke-width="1.8"/></svg>
<div class="cb" style="left:37px;top:902px"></div>
<svg class="a" style="left:64px;top:899px" width="12" height="20" viewBox="0 0 12 20"><path d="M9 3 H6.6 C4.2 3 3.3 4.8 3.3 6.6 C3.3 8.9 4.6 10.4 6.9 10.4 H9" fill="none" stroke="#ff2a00" stroke-width="2"/><rect x="8" y="2" width="2" height="16" fill="#ff2a00"/><path d="M6.4 10.2 L3 18" fill="none" stroke="#ff2a00" stroke-width="2"/></svg>
<div class="a lnk" style="left:82px;top:902px;">мелованный и немелованный картон отличия</div>
<div class="a rt" style="left:1188px;top:903px;width:83px;color:#222;">27</div><div class="a rt" style="left:1295px;top:903px;width:105px;color:#222;">27</div><div class="a rt" style="left:1424px;top:903px;width:76.3px;color:#222;letter-spacing:-0.25px;">100<span style="margin-left:2.5px">%</span></div><div class="a rt" style="left:1524px;top:903px;width:82px;color:#222;">1</div><div class="a rt" style="left:1630px;top:903px;width:70px;color:#222;">0:00</div>
<div class="bar" style="left:1188px;top:919px;width:83px"><i style="width:38.6px"></i></div>
<div class="bar" style="left:1295px;top:919px;width:105px"><i style="width:49.7px"></i></div>
<div class="bar" style="left:1424px;top:919px;width:76px"><i style="width:76.0px"></i></div>
<div class="bar" style="left:1524px;top:919px;width:82px"><i style="width:22.2px"></i></div>
<div class="bar" style="left:1630px;top:919px;width:70px"><i style="width:0.0px"></i></div>
<div class="rowline" style="top:968px"></div>
<div class="pl" style="left:9px;top:941px"></div>
<svg class="a" style="left:9px;top:941px" width="16" height="16" viewBox="0 0 16 16"><path d="M8 4.2 V11.8 M4.2 8 H11.8" stroke="#8a8a8a" stroke-width="1.8"/></svg>
<div class="cb" style="left:37px;top:942px"></div>
<svg class="a" style="left:64px;top:939px" width="12" height="20" viewBox="0 0 12 20"><path d="M9 3 H6.6 C4.2 3 3.3 4.8 3.3 6.6 C3.3 8.9 4.6 10.4 6.9 10.4 H9" fill="none" stroke="#ff2a00" stroke-width="2"/><rect x="8" y="2" width="2" height="16" fill="#ff2a00"/><path d="M6.4 10.2 L3 18" fill="none" stroke="#ff2a00" stroke-width="2"/></svg>
<div class="a lnk" style="left:82px;top:942px;">высокая печать</div>
<div class="a rt" style="left:1188px;top:943px;width:83px;color:#222;">25</div><div class="a rt" style="left:1295px;top:943px;width:105px;color:#222;">25</div><div class="a rt" style="left:1424px;top:943px;width:76.3px;color:#222;letter-spacing:-0.25px;">96<span style="margin-left:2.5px">%</span></div><div class="a rt" style="left:1524px;top:943px;width:82px;color:#222;">1,04</div><div class="a rt" style="left:1630px;top:943px;width:70px;color:#222;">0:15</div>
<div class="bar" style="left:1188px;top:959px;width:83px"><i style="width:35.8px"></i></div>
<div class="bar" style="left:1295px;top:959px;width:105px"><i style="width:46.1px"></i></div>
<div class="bar" style="left:1424px;top:959px;width:76px"><i style="width:73.0px"></i></div>
<div class="bar" style="left:1524px;top:959px;width:82px"><i style="width:23.0px"></i></div>
<div class="bar" style="left:1630px;top:959px;width:70px"><i style="width:4.4px"></i></div>
</body></html>
